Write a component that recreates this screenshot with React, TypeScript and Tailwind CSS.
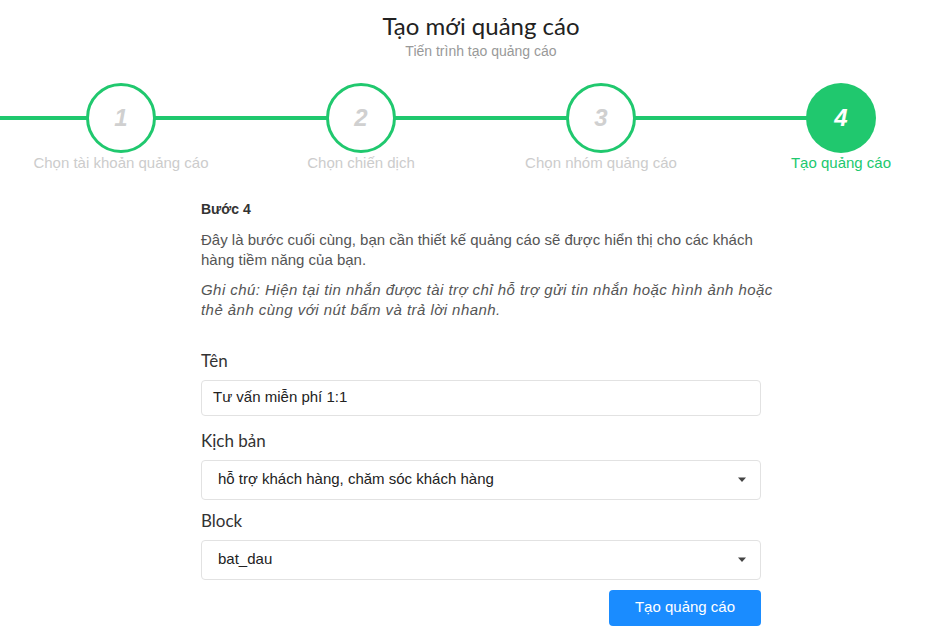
const steps = [
  { n: 1, label: 'Chọn tài khoản quảng cáo' },
  { n: 2, label: 'Chọn chiến dịch' },
  { n: 3, label: 'Chọn nhóm quảng cáo' },
  { n: 4, label: 'Tạo quảng cáo' },
]

const current = 4

function Stepper() {
  return (
    <div className="relative mt-[23px] flex pl-[1px]">
      {/* connector line behind the circles */}
      <div className="absolute left-0 top-[33px] h-[4px] w-[840px] bg-[#20c86e]" />
      {steps.map((s) => {
        const active = s.n === current
        return (
          <div key={s.n} className="relative flex w-[240px] shrink-0 flex-col items-center">
            <div
              className={
                active
                  ? 'flex h-[70px] w-[70px] items-center justify-center rounded-full bg-[#20c86e] text-[24px] font-bold italic text-white'
                  : 'flex h-[70px] w-[70px] items-center justify-center rounded-full border-[3px] border-[#20c86e] bg-white text-[24px] font-bold italic text-[#d0d0d0]'
              }
            >
              {s.n}
            </div>
            <div className={active ? '-mt-[1px] text-[15px] text-[#20c86e]' : '-mt-[1px] text-[15px] text-[#cccccc]'}>
              {s.label}
            </div>
          </div>
        )
      })}
    </div>
  )
}

function Field({ label, children }: { label: string; children: React.ReactNode }) {
  return (
    <div className="mt-[8px] flex flex-col">
      <div className="mb-[6px] font-['Lato','Open_Sans',sans-serif] text-[17px] leading-[26px] text-[#333]">{label}</div>
      {children}
    </div>
  )
}

function Select({ value }: { value: string }) {
  return (
    <div className="flex h-[40px] items-center justify-between rounded-[4px] border border-[#e2e2e2] bg-white pl-[16px] pr-[12px] text-[15px] text-[#222]">
      <span>{value}</span>
      <svg width="10" height="6" viewBox="0 0 10 6" className="mr-[1px]">
        <path d="M1 0.5 H9 L5 5 Z" fill="#444" />
      </svg>
    </div>
  )
}

export default function App() {
  return (
    <div className="h-[636px] w-[935px] overflow-hidden bg-white font-['Liberation_Sans',Arial,sans-serif]">
      <div className="w-[962px]">
        <div className="pt-[10px] text-center">
          <h1 className="font-['Lato','Open_Sans',sans-serif] text-[24px] leading-[32px] text-[#222]">Tạo mới quảng cáo</h1>
          <div className="text-[14px] leading-[18px] text-[#999]">Tiến trình tạo quảng cáo</div>
        </div>

        <Stepper />

        <div className="mx-auto mt-[24px] w-[560px]">
          <div className="text-[14px] font-bold leading-[20px] text-[#333]">Bước 4</div>
          <p className="mt-[11px] text-[15px] leading-[20px] text-[#555]">
            Đây là bước cuối cùng, bạn cần thiết kế quảng cáo sẽ được hiển thị cho các khách hàng tiềm năng của bạn.
          </p>
          <p className="mt-[10px] w-[580px] text-[15px] italic leading-[20px] tracking-[0.45px] text-[#555]">
            Ghi chú: Hiện tại tin nhắn được tài trợ chỉ hỗ trợ gửi tin nhắn hoặc hình ảnh hoặc thẻ ảnh cùng với nút bấm và trả lời nhanh.
          </p>

          <div className="mt-[28px]">
            <Field label="Tên">
              <div className="mb-[4px] flex h-[36px] items-center rounded-[4px] border border-[#e2e2e2] bg-white px-[11px] text-[15px] text-[#222]">
                Tư vấn miễn phí 1:1
              </div>
            </Field>
            <Field label="Kịch bản">
              <Select value="hỗ trợ khách hàng, chăm sóc khách hàng" />
            </Field>
            <Field label="Block">
              <Select value="bat_dau" />
            </Field>
          </div>

          <div className="mt-[10px] flex justify-end">
            <button className="h-[36px] w-[152px] rounded-[4px] bg-[#1a8cff] text-[15px] text-white">Tạo quảng cáo</button>
          </div>
        </div>
      </div>
    </div>
  )
}
